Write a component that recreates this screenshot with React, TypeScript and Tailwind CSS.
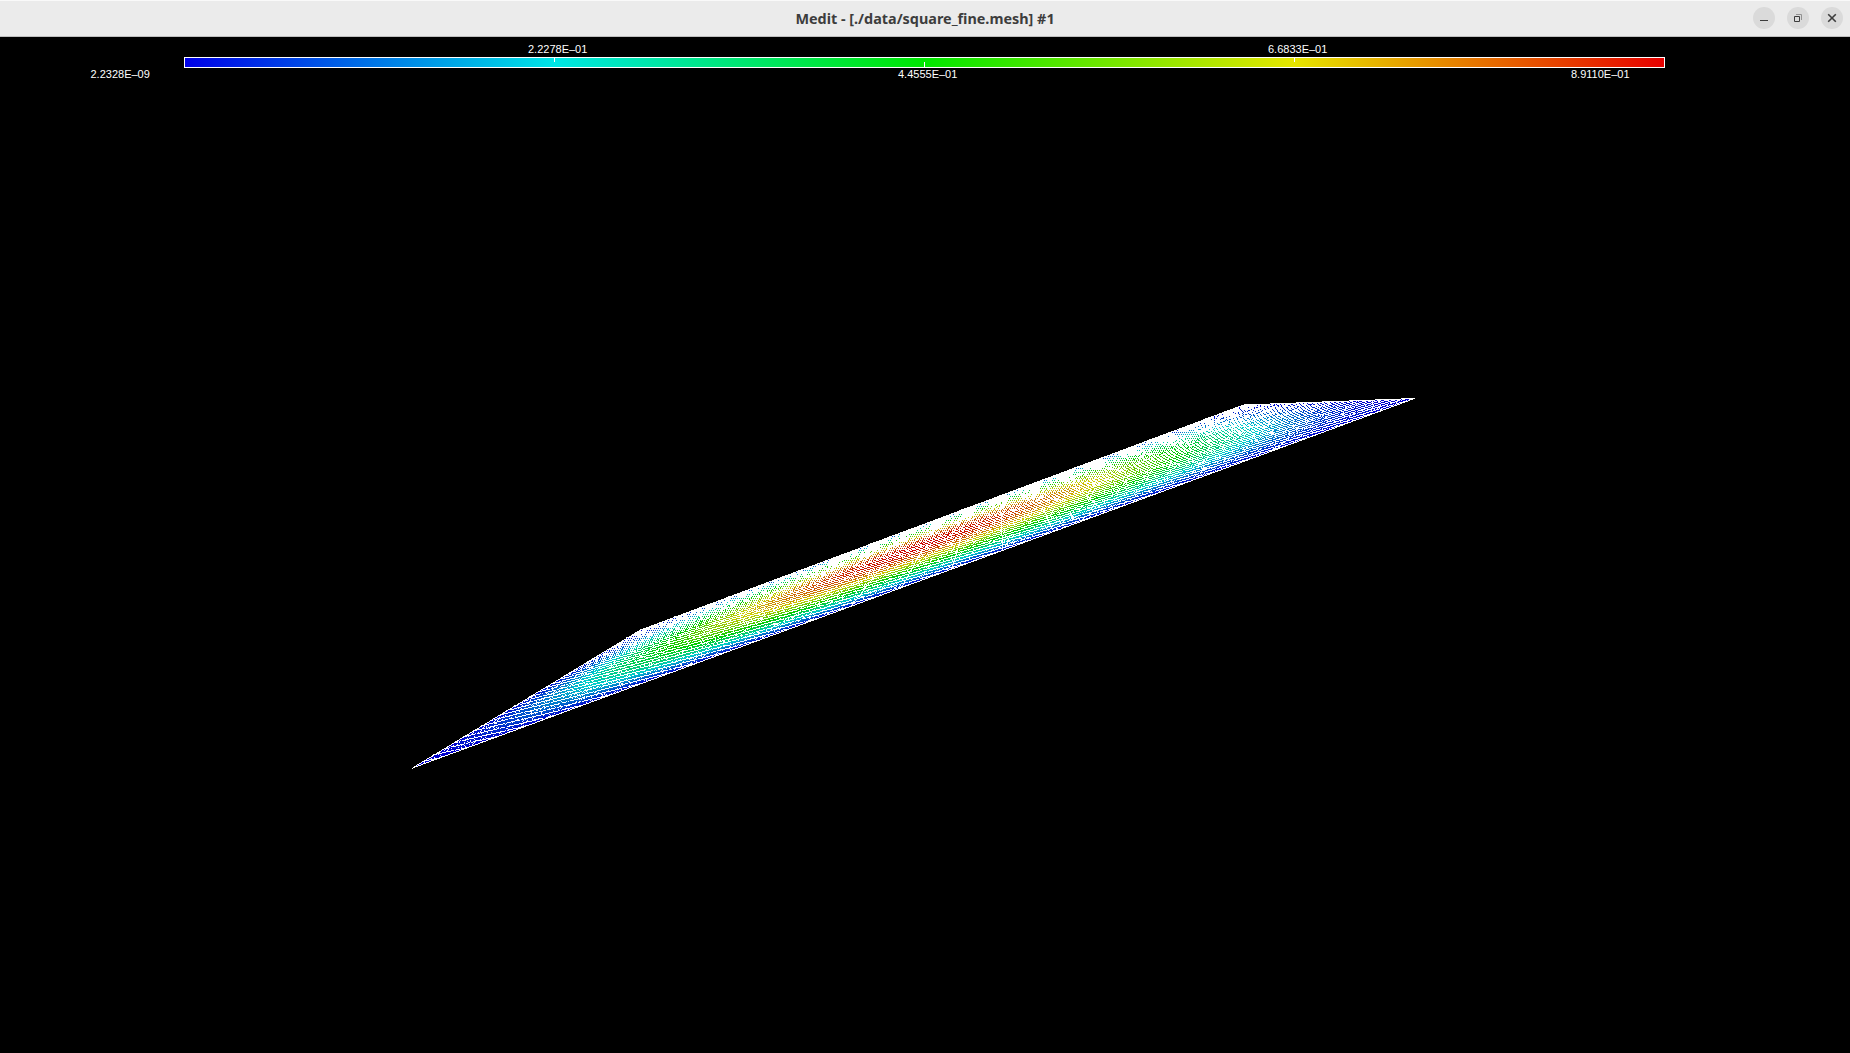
import React from "react";

type Point = [number, number];

const ORIGIN_X = 405;
const ORIGIN_Y = 390;
const WIDTH = 1020;
const HEIGHT = 385;
const DIAGONALS = 33;
const COLUMNS = 20;

const NEAR_LEFT: Point = [412, 768];
const FAR_LEFT: Point = [640, 630];
const FAR_RIGHT: Point = [1243, 405];
const NEAR_RIGHT: Point = [1414, 398.5];

/** Projective map from the unit square to the projected sheet. */
function projection() {
  const [x0, y0] = NEAR_LEFT;
  const [x1, y1] = NEAR_RIGHT;
  const [x2, y2] = FAR_RIGHT;
  const [x3, y3] = FAR_LEFT;
  const dx1 = x1 - x2;
  const dx2 = x3 - x2;
  const dy1 = y1 - y2;
  const dy2 = y3 - y2;
  const sx = x0 - x1 + x2 - x3;
  const sy = y0 - y1 + y2 - y3;
  const det = dx1 * dy2 - dx2 * dy1;
  const g = (sx * dy2 - dx2 * sy) / det;
  const h = (dx1 * sy - sx * dy1) / det;
  return [x1 - x0 + g * x1, x3 - x0 + h * x3, x0, y1 - y0 + g * y1, y3 - y0 + h * y3, y0, g, h];
}

const [a, b, c, d, e, f, g, h] = projection();

const project = (u: number, v: number): Point => {
  const w = g * u + h * v + 1;
  return [(a * u + b * v + c) / w, (d * u + e * v + f) / w];
};

const unproject = (x: number, y: number): Point => {
  const m11 = a - g * x;
  const m12 = b - h * x;
  const m21 = d - g * y;
  const m22 = e - h * y;
  const det = m11 * m22 - m12 * m21;
  return [((x - c) * m22 - m12 * (y - f)) / det, (m11 * (y - f) - (x - c) * m21) / det];
};

const noise = (x: number, y: number) => {
  const n = Math.sin(x * 127.1 + y * 311.7) * 43758.5453;
  return n - Math.floor(n);
};

// Column of the grid that is drawn exactly vertical on screen.
const VERTICAL_U = unproject(1002.5, 545)[0];

function buildMesh() {
  const wire = new Uint8Array(WIDTH * HEIGHT);
  const line = (p: Point, q: Point, mark: number) => {
    const dx = q[0] - p[0];
    const dy = q[1] - p[1];
    const steps = Math.max(1, Math.ceil(Math.max(Math.abs(dx), Math.abs(dy))));
    for (let i = 0; i <= steps; i++) {
      const x = Math.floor(p[0] + (dx * i) / steps) - ORIGIN_X;
      const y = Math.floor(p[1] + (dy * i) / steps) - ORIGIN_Y;
      wire[y * WIDTH + x] = mark;
    }
  };
  for (let i = 1; i < DIAGONALS * 2; i++) {
    const s = i / DIAGONALS;
    line(project(Math.max(0, s - 1), Math.min(1, s)), project(Math.min(1, s), Math.max(0, s - 1)), 1);
  }
  for (let i = -3; i <= 2; i++) {
    const u = VERTICAL_U + i / COLUMNS;
    line(project(u, 0), project(u, i === 0 ? 0.7 : 0.4), 2);
  }
  line(project(0, 0), project(1, 0), 2);
  line(project(1, 0), project(1, 1), 2);
  line(project(1, 1), project(0, 1), 2);
  line(project(0, 1), project(0, 0), 2);

  const paths: Record<string, string> = {};
  for (let y = 0; y < HEIGHT; y++) {
    let runStart = 0;
    let runColor = "";
    for (let x = 0; x <= WIDTH; x++) {
      let color = "";
      if (x < WIDTH) {
        const [u, v] = unproject(x + ORIGIN_X + 0.5, y + ORIGIN_Y + 0.5);
        const inside = u > 0 && u < 1 && v > 0 && v < 1;
        const mark = wire[y * WIDTH + x];
        if (inside || mark) {
          color = "#ffffff";
          const r = noise(x, y);
          const fan = 0.5 - 0.5 * Math.cos(2 * Math.PI * (u - VERTICAL_U) * COLUMNS);
          const open = v < 0.55 || u > 0.82 + 0.1 * v;
          let painted = false;
          if (mark !== 2 && inside) {
            if (open) {
              painted = mark === 0 ? r > 0.12 : r < 0.06;
            } else {
              // Distant cells collapse into isolated dots that thin out along the grid columns.
              const fade = (v - 0.55) / 0.45;
              const even = (x + (y >> 1)) % 2 === 0;
              const gap = u > 0.35 ? fan : 0.65;
              const density = 1.15 - 0.6 * fade - 0.95 * Math.sqrt(fade) * (1 - gap);
              if (y % 2 === 0) painted = even && r < density;
              else painted = mark === 0 && r < 0.8 - 1.3 * fade;
            }
          }
          if (painted) {
            const value = Math.sin(Math.PI * u) * Math.sin(Math.PI * v);
            const hue = Math.round((240 * (1 - value)) / 6) * 6;
            color = `hsl(${hue} 100% 40%)`;
          }
        }
      }
      if (color !== runColor) {
        if (runColor) {
          paths[runColor] = (paths[runColor] || "") + `M${runStart} ${y}h${x - runStart}v1h${runStart - x}z`;
        }
        runStart = x;
        runColor = color;
      }
    }
  }
  return Object.entries(paths);
}

const meshPaths = buildMesh();

function Label({ text, className }: { text: string; className: string }) {
  return (
    <span
      className={`absolute whitespace-nowrap font-['Liberation_Sans',sans-serif] text-[11px] leading-[12px] text-white ${className}`}
    >
      {text}
    </span>
  );
}

function WindowButton({ children, label }: { children: React.ReactNode; label: string }) {
  return (
    <button aria-label={label} className="flex size-[22px] items-center justify-center rounded-full bg-[#dadada]">
      <svg width="22" height="22" viewBox="0 0 22 22" fill="none" stroke="#3d3d3d">
        {children}
      </svg>
    </button>
  );
}

export default function App() {
  return (
    <div className="flex h-[1053px] w-[1850px] flex-col overflow-hidden bg-black">
      <header className="relative flex h-[37px] shrink-0 items-center justify-center border-t border-b border-t-[#f9f9f9] border-b-[#bfbfbf] bg-[#ebebeb]">
        <h1 className="font-['Noto_Sans',sans-serif] text-[14.4px] font-bold whitespace-nowrap text-[#3d3d3d]">
          Medit - [./data/square_fine.mesh] #1
        </h1>
        <div className="absolute top-[6px] right-[7px] flex gap-3">
          <WindowButton label="Minimize">
            <path d="M7 13.5h8" />
          </WindowButton>
          <WindowButton label="Restore">
            <path d="M7.5 9.5h5v5h-5z" />
            <path d="M9 7.5h5.5V13" stroke="#929292" />
          </WindowButton>
          <WindowButton label="Close">
            <path d="M7.2 7.2l7.6 7.6M14.8 7.2l-7.6 7.6" strokeWidth="1.6" />
          </WindowButton>
        </div>
      </header>
      <main className="relative flex-1">
        <div className="mt-5 ml-[184px] flex h-[11px] w-[1481px] border border-white bg-[linear-gradient(to_right,#0000e6,#00e6e6_25%,#00e600_50%,#e6e600_75%,#e60000)]">
          <div className="ml-[369px] h-1 w-px bg-white" />
          <div className="ml-[369px] h-[5px] w-px self-end bg-white" />
          <div className="ml-[369px] h-1 w-px bg-white" />
        </div>
        <Label text="2.2328E–09" className="top-[31px] left-[90.5px]" />
        <Label text="2.2278E–01" className="top-[6px] left-[528px]" />
        <Label text="4.4555E–01" className="top-[31px] left-[898px]" />
        <Label text="6.6833E–01" className="top-[6px] left-[1268px]" />
        <Label text="8.9110E–01" className="top-[31px] left-[1571px]" />
        <svg
          className="absolute top-[353px] left-[405px]"
          width={WIDTH}
          height={HEIGHT}
          viewBox={`0 0 ${WIDTH} ${HEIGHT}`}
          shapeRendering="crispEdges"
        >
          {meshPaths.map(([color, path]) => (
            <path key={color} d={path} fill={color} />
          ))}
        </svg>
      </main>
    </div>
  );
}
